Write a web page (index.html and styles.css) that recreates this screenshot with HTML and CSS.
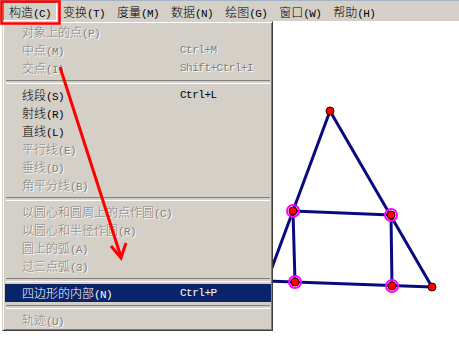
FILE: index.html
```html
<!DOCTYPE html>
<html>
<head>
    <meta charset="UTF-8">
    <link rel="stylesheet" href="styles.css">
</head>
<body>
<div class="app">
    <!-- 菜单栏 -->
    <div class="menubar">
        <span class="menu-title active">构造<span class="acc">(C)</span></span>
        <span class="menu-title">变换<span class="acc">(T)</span></span>
        <span class="menu-title">度量<span class="acc">(M)</span></span>
        <span class="menu-title">数据<span class="acc">(N)</span></span>
        <span class="menu-title">绘图<span class="acc">(G)</span></span>
        <span class="menu-title">窗口<span class="acc">(W)</span></span>
        <span class="menu-title">帮助<span class="acc">(H)</span></span>
    </div>

    <!-- 画板 -->
    <div class="canvas">
        <svg class="sketch" width="459" height="332" viewBox="0 21 459 332">
            <g class="segments">
                <line x1="330" y1="111" x2="267" y2="281"/>
                <line x1="330" y1="111" x2="432" y2="287"/>
                <line x1="267" y1="281" x2="432" y2="287"/>
                <line x1="293" y1="211" x2="391" y2="215"/>
                <line x1="293" y1="211" x2="295" y2="282"/>
                <line x1="391" y1="215" x2="392" y2="286"/>
            </g>
            <g class="rings">
                <circle cx="293" cy="211" r="6"/>
                <circle cx="391" cy="215" r="6"/>
                <circle cx="295" cy="282" r="6"/>
                <circle cx="392" cy="286" r="6"/>
            </g>
            <g class="points">
                <circle cx="330" cy="111" r="4"/>
                <circle cx="432" cy="287" r="4"/>
                <circle cx="293" cy="211" r="4"/>
                <circle cx="391" cy="215" r="4"/>
                <circle cx="295" cy="282" r="4"/>
                <circle cx="392" cy="286" r="4"/>
            </g>
        </svg>
    </div>

    <!-- 构造 下拉菜单 -->
    <div class="dropdown">
        <div class="item disabled"><span class="label">对象上的点<span class="acc">(P)</span></span></div>
        <div class="item disabled"><span class="label">中点<span class="acc">(M)</span></span><span class="shortcut">Ctrl+M</span></div>
        <div class="item disabled"><span class="label">交点<span class="acc">(I)</span></span><span class="shortcut">Shift+Ctrl+I</span></div>
        <div class="separator"></div>
        <div class="item"><span class="label">线段<span class="acc">(S)</span></span><span class="shortcut">Ctrl+L</span></div>
        <div class="item"><span class="label">射线<span class="acc">(R)</span></span></div>
        <div class="item"><span class="label">直线<span class="acc">(L)</span></span></div>
        <div class="item disabled"><span class="label">平行线<span class="acc">(E)</span></span></div>
        <div class="item disabled"><span class="label">垂线<span class="acc">(D)</span></span></div>
        <div class="item disabled"><span class="label">角平分线<span class="acc">(B)</span></span></div>
        <div class="separator"></div>
        <div class="item disabled"><span class="label">以圆心和圆周上的点作圆<span class="acc">(C)</span></span></div>
        <div class="item disabled"><span class="label">以圆心和半径作圆<span class="acc">(R)</span></span></div>
        <div class="item disabled"><span class="label">圆上的弧<span class="acc">(A)</span></span></div>
        <div class="item disabled"><span class="label">过三点弧<span class="acc">(3)</span></span></div>
        <div class="separator"></div>
        <div class="item selected"><span class="label">四边形的内部<span class="acc">(N)</span></span><span class="shortcut">Ctrl+P</span></div>
        <div class="separator"></div>
        <div class="item disabled"><span class="label">轨迹<span class="acc">(U)</span></span></div>
    </div>

    <!-- 标注：红框和箭头 -->
    <svg class="annotation" width="459" height="353" viewBox="0 0 459 353">
        <rect x="1.5" y="1.5" width="58" height="22"/>
        <line x1="60" y1="67" x2="121" y2="257"/>
        <polyline points="111,246 121,258 126,243"/>
    </svg>
</div>
</body>
</html>
```

FILE: styles.css
```css
* {
    margin: 0;
    padding: 0;
    box-sizing: border-box;
}

body {
    width: 459px;
    height: 353px;
    overflow: hidden;
    background: #ffffff;
    font-family: "Noto Sans CJK SC", "Liberation Sans", sans-serif;
    font-size: 12px;
    font-weight: 300;
    color: #000000;
}

.app {
    position: relative;
    width: 459px;
    height: 353px;
    display: flex;
    flex-direction: column;
}

/* 半角字符：按宋体 6px 宽排列 */
.acc {
    font-family: "Liberation Mono", monospace;
    font-size: 11px;
    letter-spacing: -0.6px;
    font-weight: 400;
}

/* Menu bar */
.menubar {
    height: 21px;
    display: flex;
    align-items: center;
    padding-left: 3px;
    background: #d4d0c8;
    border-top: 1px solid #a6b4c8;
}

.menu-title {
    height: 19px;
    line-height: 17px;
    padding: 0 5px;
    white-space: nowrap;
    border: 1px solid transparent;
}

.menu-title.active {
    border-color: #808080 #ffffff #ffffff #808080;
}

/* Drawing area */
.canvas {
    flex: 1;
    background: #ffffff;
}

.sketch {
    display: block;
}

.segments line {
    stroke: #0a0a80;
    stroke-width: 3;
    stroke-linecap: round;
}

.rings circle {
    fill: none;
    stroke: #ff00ff;
    stroke-width: 2;
}

.points circle {
    fill: #ff0000;
    stroke: #3a0000;
    stroke-width: 1;
}

/* Dropdown menu */
.dropdown {
    position: absolute;
    left: 2px;
    top: 21px;
    width: 271px;
    padding: 1px 1px 1px 2px;
    background: #d4d0c8;
    border: 1px solid;
    border-color: #d4d0c8 #404040 #404040 #d4d0c8;
    box-shadow: inset 1px 1px 0 #ffffff, inset -1px -1px 0 #808080;
}

.item {
    display: flex;
    height: 18px;
    line-height: 18px;
    padding-left: 17px;
    white-space: nowrap;
}

.item .label {
    width: 158px;
}

.shortcut {
    font-family: "Liberation Mono", monospace;
    font-size: 11px;
    letter-spacing: -0.5px;
    font-weight: 400;
}

.item.disabled {
    color: #808080;
    text-shadow: 1px 1px 0 #ffffff;
}

.item.selected {
    background: #0a246a;
    color: #ffffff;
}

.separator {
    height: 9px;
    margin: 0 1px;
    padding-top: 3px;
}

.separator::before {
    content: '';
    display: block;
    height: 2px;
    border-top: 1px solid #808080;
    border-bottom: 1px solid #ffffff;
}

/* Annotation overlay */
.annotation {
    position: absolute;
    left: 0;
    top: 0;
    pointer-events: none;
}

.annotation rect {
    fill: none;
    stroke: #ff0000;
    stroke-width: 2.5;
}

.annotation line,
.annotation polyline {
    fill: none;
    stroke: #ff0000;
    stroke-width: 3;
}
```
